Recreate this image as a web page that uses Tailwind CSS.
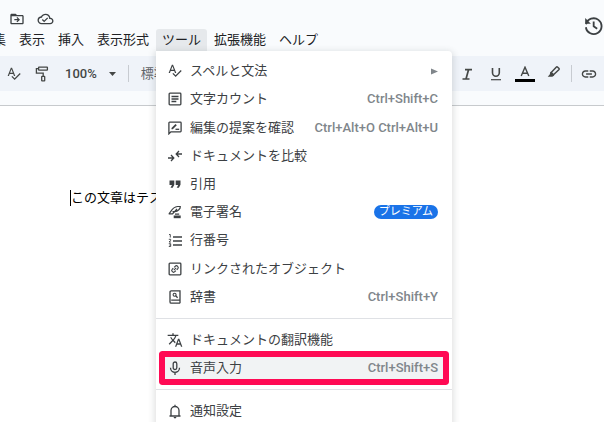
<!DOCTYPE html>
<html lang="ja">
<head>
    <meta charset="UTF-8">
    <meta name="viewport" content="width=device-width, initial-scale=1.0">
    <title>ドキュメント</title>
    <script src="https://cdn.jsdelivr.net/npm/@tailwindcss/browser@4"></script>
</head>

<body class="h-screen overflow-hidden flex flex-col bg-[#f9fbfd] text-[#3c4043] text-[13px] leading-4 font-['Roboto','Noto_Sans_CJK_JP',sans-serif]">

    <header class="flex justify-between pb-[5px]">
        <div>
            <div class="flex items-center gap-3 h-[29px] pt-2 pl-[9px]">
                <button aria-label="移動">
                    <svg class="w-4 h-4" viewBox="0 0 24 24" fill="currentColor"><path d="M20 6h-8l-2-2H4c-1.100 0-2 .9-2 2v12c0 1.100.9 2 2 2h16c1.100 0 2-.9 2-2V8c0-1.100-.9-2-2-2zm0 12H4V8h16v10zm-7.500-1 4-4-4-4-1.300 1.300 1.800 1.800H8v1.800h5l-1.800 1.800z"/></svg>
                </button>
                <button aria-label="保存済み">
                    <svg class="w-[17px] h-4" viewBox="0 0 24 24" fill="currentColor"><path d="M19.350 10.040A7.490 7.490 0 0 0 12 4C9.110 4 6.600 5.640 5.350 8.040A5.994 5.994 0 0 0 0 14c0 3.310 2.690 6 6 6h13c2.760 0 5-2.240 5-5 0-2.640-2.050-4.780-4.650-4.960zM19 18H6c-2.210 0-4-1.790-4-4s1.790-4 4-4h.71C7.370 7.690 9.480 6 12 6c3.040 0 5.500 2.460 5.500 5.500v.5H19c1.660 0 3 1.340 3 3s-1.340 3-3 3zm-9-3.820-2.090-2.090L6.500 13.500 10 17l6.010-6.010-1.410-1.410z"/></svg>
                </button>
            </div>
            <nav class="flex gap-px -ml-[26px] text-[#202124] whitespace-nowrap">
                <button class="h-[22px] px-1.5">編集</button>
                <button class="h-[22px] px-1.5">表示</button>
                <button class="h-[22px] px-1.5">挿入</button>
                <button class="h-[22px] px-1.5">表示形式</button>
                <div class="relative">
                    <button class="h-[22px] px-1.5 rounded-t-[3px] bg-[#e6e9ec]" aria-haspopup="true" aria-expanded="true">ツール</button>

                    <!-- Tools menu -->
                    <div class="absolute left-0 top-full z-10 w-[296px] pt-1.5 pb-4 bg-white rounded-r-[4px] shadow-[0_2px_6px_2px_rgba(60,64,67,0.15)] text-[#3c4043]" role="menu">
                        <div class="grid auto-rows-fr h-[254px]">
                            <button class="flex items-center gap-2 pl-3 pr-3.5" role="menuitem">
                                <svg class="w-3.5 h-3.5" viewBox="1.500 2 22 22" fill="currentColor"><path d="M12.450 16h2.090L9.430 3H7.570L2.460 16h2.090l1.120-3h5.640l1.140 3zm-6.020-5L8.500 5.480 10.570 11H6.430zm15.160.59-8.090 8.090L9.830 16l-1.410 1.410 5.090 5.090L23 13l-1.410-1.410z"/></svg>
                                <span>スペルと文法</span>
                                <svg class="ml-auto w-[7px] h-[7px] text-[#80868b]" viewBox="0 0 7 7" fill="currentColor"><path d="M0 0.500 7 3.500 0 6.500z"/></svg>
                            </button>
                            <button class="flex items-center gap-2 pl-3 pr-3.5" role="menuitem">
                                <svg class="w-3.5 h-3.5" viewBox="0 0 14 14" fill="none" stroke="currentColor" stroke-width="1.300"><rect x="1.150" y="1.150" width="11.700" height="11.700" rx=".8"/><path d="M3.500 4.500h7M3.500 7h7M3.500 9.500h4.800"/></svg>
                                <span>文字カウント</span>
                                <span class="ml-auto font-medium text-[#80868b]">Ctrl+Shift+C</span>
                            </button>
                            <button class="flex items-center gap-2 pl-3 pr-3.5" role="menuitem">
                                <svg class="w-3.5 h-3.5" viewBox="0 0 14 14" fill="none" stroke="currentColor" stroke-width="1.300"><path d="M.9 12.800V1.900c0-.4.300-.7.700-.7h10.800c.4 0 .7.300.7.700v8.200c0 .4-.3.700-.7.700H2.900z"/><path d="M7.500 8.300h3.700" /><path d="M3.500 8.300v-1.300l4-4 1.300 1.300-4 4z" fill="currentColor" stroke="none"/></svg>
                                <span>編集の提案を確認</span>
                                <span class="ml-auto font-medium text-[#80868b]">Ctrl+Alt+O Ctrl+Alt+U</span>
                            </button>
                            <button class="flex items-center gap-2 pl-3 pr-3.5" role="menuitem">
                                <svg class="w-3.5 h-3.5" viewBox="0 0 14 14" fill="none" stroke="currentColor" stroke-width="1.300"><path d="M14 5H8.500M11 2 8.200 5 11 8M0 9h5.500M3 6l2.800 3L3 12"/></svg>
                                <span>ドキュメントを比較</span>
                            </button>
                            <button class="flex items-center gap-2 pl-3 pr-3.5" role="menuitem">
                                <svg class="w-3.5 h-3.5" viewBox="0 0 14 14" fill="currentColor"><path d="M1.500 3.500h4.800v4.300L4.700 10.800H2.500L4 8H1.500zM7.700 3.500h4.800v4.300l-1.600 3H8.700L10.200 8H7.700z"/></svg>
                                <span>引用</span>
                            </button>
                            <button class="flex items-center gap-2 pl-3 pr-3.5" role="menuitem">
                                <svg class="w-3.5 h-3.5" viewBox="0 0 14 14" fill="none" stroke="currentColor" stroke-width="1.200"><path d="M.7 8.800C3 8 3.500 2.200 9.500 1.500h2.800c.3 2.200-2.300 4.800-5.500 5.100H4.500M.7 8.800h3.800L9 4M7 9.200h4.200"/><path d="M5.700 10.500h7v2.700h-7z" fill="currentColor" stroke="none"/></svg>
                                <span>電子署名</span>
                                <span class="ml-auto px-[5px] h-[14px] rounded-full bg-[#1a73e8] text-white text-[11px] leading-[14px]">プレミアム</span>
                            </button>
                            <button class="flex items-center gap-2 pl-3 pr-3.5" role="menuitem">
                                <svg class="w-3.5 h-3.5" viewBox="0 0 14 14" fill="none" stroke="currentColor" stroke-width="1.300"><path d="M5 4h9M5 8h9M5 12h9"/><path d="M1 1.500h1.300v3M.8 6.300h1.900v1L1 9h2M.8 10.700h1.900v2.800H.8M1.300 12.100h1.400" stroke-width=".9"/></svg>
                                <span>行番号</span>
                            </button>
                            <button class="flex items-center gap-2 pl-3 pr-3.5" role="menuitem">
                                <svg class="w-3.5 h-3.5" viewBox="0 0 14 14" fill="none" stroke="currentColor" stroke-width="1.300"><rect x="1.150" y="1.150" width="11.700" height="11.700" rx=".8"/><g transform="rotate(-45 7 7)" stroke-width="1.100"><path d="M6.400 5.200H5a1.800 1.800 0 0 0 0 3.600h1.400M7.600 5.200H9a1.800 1.800 0 0 1 0 3.600H7.600M5.300 7h3.400"/></g></svg>
                                <span>リンクされたオブジェクト</span>
                            </button>
                            <button class="flex items-center gap-2 pl-3 pr-3.5" role="menuitem">
                                <svg class="w-3.5 h-3.5" viewBox="0 0 14 14" fill="none" stroke="currentColor" stroke-width="1.300"><path d="M12 10.200V.8H3.200c-.7 0-1.200.5-1.200 1.200v10c0 .7.500 1.200 1.200 1.200H12M12 10.200H3.200M12 9.800v3.400"/><circle cx="6.600" cy="4.700" r="1.500" stroke-width="1.100"/><path d="m7.700 5.800 1.900 1.900"/></svg>
                                <span>辞書</span>
                                <span class="ml-auto font-medium text-[#80868b]">Ctrl+Shift+Y</span>
                            </button>
                        </div>
                        <hr class="my-[7px] border-[#dfe1e5]">
                        <div class="grid auto-rows-fr h-[56px]">
                            <button class="flex items-center gap-2 pl-3 pr-3.5" role="menuitem">
                                <svg class="-mx-px w-4 h-4" viewBox="0 0 24 24" fill="currentColor"><path d="m12.870 15.070-2.540-2.510.03-.03A17.520 17.520 0 0 0 14.070 6H17V4h-7V2H8v2H1v2h11.170C11.500 7.920 10.440 9.750 9 11.350 8.070 10.320 7.300 9.190 6.690 8h-2c.73 1.630 1.730 3.170 2.980 4.560l-5.090 5.020L4 19l5-5 3.110 3.110.76-2.040zM18.500 10h-2L12 22h2l1.120-3h4.750L21 22h2l-4.500-12zm-2.620 7 1.620-4.330L19.120 17h-3.240z"/></svg>
                                <span>ドキュメントの翻訳機能</span>
                            </button>
                            <button class="relative flex items-center gap-2 pl-3 pr-3.5 bg-[#f1f3f4]" role="menuitem">
                                <svg class="w-3.5 h-[15px]" viewBox="0 0 14 15" fill="none" stroke="currentColor" stroke-width="1.300"><rect x="5.200" y="1" width="3.600" height="7.600" rx="1.800"/><path d="M2.500 6.800a4.500 4.500 0 0 0 9 0M7 11.300V14"/></svg>
                                <span>音声入力</span>
                                <span class="ml-auto font-medium text-[#80868b]">Ctrl+Shift+S</span>
                                <!-- red frame around voice typing, white rim hides the hover background outside it -->
                                <span class="absolute inset-x-[3px] -inset-y-[3px] rounded-[3px] border-[6px] border-[#ff0a54] outline-[3px] outline-white"></span>
                            </button>
                        </div>
                        <hr class="my-[7px] border-[#dfe1e5]">
                        <div class="grid h-7">
                            <button class="flex items-center gap-2 pl-3 pr-3.5" role="menuitem">
                                <svg class="w-3.5 h-[15px]" viewBox="0 0 14 15" fill="none" stroke="currentColor" stroke-width="1.300"><path d="M1.500 12h11M3 12V6.500a4 4 0 0 1 8 0V12M7 2.500V.8"/><path d="M5.600 13h2.800a1.400 1.400 0 0 1-2.800 0z" fill="currentColor" stroke="none"/></svg>
                                <span>通知設定</span>
                            </button>
                        </div>
                    </div>
                </div>
                <button class="h-[22px] px-1.5">拡張機能</button>
                <button class="h-[22px] px-1.5">ヘルプ</button>
            </nav>
        </div>
        <button class="self-start mt-[15px]" aria-label="変更履歴">
            <svg class="w-[21px] h-[21px]" viewBox="0 0 24 24" fill="none" stroke="currentColor" stroke-width="2.100"><path d="M3.500 10.500A9 9 0 1 1 3.300 14M12.200 7.500V13l4 2.800"/><path d="M2.500 3.500V10H9z" fill="currentColor" stroke="none"/></svg>
        </button>
    </header>

    <div class="flex items-center justify-between h-[35px] bg-[#eff3f9] text-[#444746]" role="toolbar">
        <div class="flex items-center pl-[7px]">
            <button aria-label="スペルチェック">
                <svg class="w-3.5 h-3.5" viewBox="1.500 2 22 22" fill="currentColor"><path d="M12.450 16h2.090L9.430 3H7.570L2.460 16h2.090l1.120-3h5.640l1.140 3zm-6.020-5L8.500 5.480 10.570 11H6.430zm15.160.59-8.090 8.090L9.830 16l-1.410 1.410 5.090 5.090L23 13l-1.410-1.410z"/></svg>
            </button>
            <button class="ml-[14px]" aria-label="書式の貼り付け">
                <svg class="w-3.5 h-4" viewBox="0 0 14 16" fill="none" stroke="currentColor" stroke-width="1.300"><rect x="3.600" y="1.200" width="8.800" height="3" rx=".4"/><path d="M3.600 2.700H1.400v4.400h6.800v3.200"/><rect x="6.700" y="10.400" width="3" height="4.400" rx=".4"/></svg>
            </button>
            <button class="flex items-center gap-3 ml-4">
                <span class="font-medium">100%</span>
                <svg class="w-[7px] h-1" viewBox="0 0 7 4" fill="currentColor"><path d="M0 0h7L3.500 4z"/></svg>
            </button>
            <span class="ml-3 w-px h-[17px] bg-[#c7cbd1]"></span>
            <button class="ml-3 text-[#5f6368]">標準</button>
        </div>
        <div class="flex items-center pr-[7px]">
            <button aria-label="斜体">
                <svg class="w-3.5 h-3.5" viewBox="0 0 14 14" fill="none" stroke="currentColor" stroke-width="1.700"><path d="M5 2.600h7M2.500 12h7M8.600 2.600 6 12"/></svg>
            </button>
            <button class="ml-[15px]" aria-label="下線">
                <svg class="w-3.5 h-3.5" viewBox="0 0 14 14" fill="none" stroke="currentColor" stroke-width="1.600"><path d="M3.500 1v4.800a3.400 3.400 0 0 0 6.800 0V1"/><path d="M2 12.700h10" stroke-width="1.200"/></svg>
            </button>
            <button class="ml-3" aria-label="テキストの色">
                <svg class="w-5 h-4" viewBox="0 0 20 16" fill="none" stroke="currentColor" stroke-width="1.400"><path d="M6.200 10 10 1.200 13.800 10M7.400 7.300h5.200"/><path d="M0 14.500h20" stroke="#000" stroke-width="3"/></svg>
            </button>
            <button class="ml-3 pb-1" aria-label="ハイライトの色">
                <svg class="w-3.5 h-3.5" viewBox="0 0 14 14" fill="none" stroke="currentColor" stroke-width="1.500"><path d="M4.200 7.500 9.200 2.200c.5-.5 1-.5 1.500 0l1.100 1.100c.5.5.5 1 0 1.500L6.500 9.800z"/><path d="M3.500 6.700 7.300 10.500l-2 1.300H.7l2-2.300z" fill="currentColor" stroke="none"/></svg>
            </button>
            <span class="ml-2.5 w-px h-[17px] bg-[#c7cbd1]"></span>
            <button class="ml-[9px]" aria-label="リンクを挿入">
                <svg class="w-4 h-4" viewBox="1 1 22 22" fill="currentColor"><path d="M3.900 12c0-1.710 1.390-3.100 3.100-3.100h4V7H7c-2.760 0-5 2.240-5 5s2.240 5 5 5h4v-1.900H7c-1.710 0-3.100-1.390-3.100-3.100zM8 13h8v-2H8v2zm9-6h-4v1.900h4c1.710 0 3.100 1.390 3.100 3.100s-1.390 3.100-3.100 3.100h-4V17h4c2.760 0 5-2.240 5-5s-2.240-5-5-5z"/></svg>
            </button>
        </div>
    </div>

    <main class="grow mt-[14px] pt-[84px] pl-[70px] bg-white border-t border-[#c7cacd] text-black">
        <p class="border-l border-black">この文章はテスト</p>
    </main>

</body>
</html>
